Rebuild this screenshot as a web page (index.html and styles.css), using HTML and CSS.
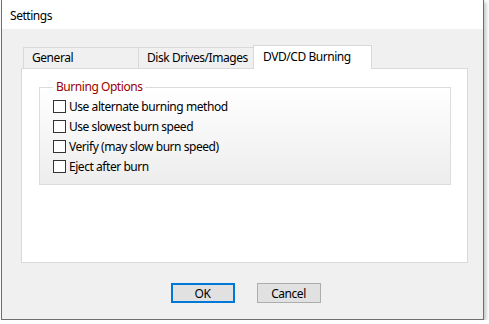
FILE: index.html
```html
<!DOCTYPE html>
<html lang="en">

<head>
    <meta charset="UTF-8" />
    <title>Settings</title>
    <link rel="stylesheet" href="styles.css">
</head>

<body>
    <div class="window">
        <div class="titlebar">Settings</div>

        <div class="content">
            <div class="tabs">
                <div class="tab">General</div>
                <div class="tab">Disk Drives/Images</div>
                <div class="tab active">DVD/CD Burning</div>
            </div>

            <div class="panel">
                <fieldset class="group">
                    <legend>Burning Options</legend>
                    <label class="check"><input type="checkbox"> Use alternate burning method</label>
                    <label class="check"><input type="checkbox"> Use slowest burn speed</label>
                    <label class="check"><input type="checkbox"> Verify (may slow burn speed)</label>
                    <label class="check"><input type="checkbox"> Eject after burn</label>
                </fieldset>
            </div>

            <div class="buttons">
                <button class="btn default">OK</button>
                <button class="btn">Cancel</button>
            </div>
        </div>
    </div>
</body>

</html>
```

FILE: styles.css
```css
body {
    margin: 0;
    padding: 0;
    background-color: #ffffff;
    font-family: 'Noto Sans', 'Open Sans', sans-serif;
    font-size: 12px;
    letter-spacing: -0.45px;
    color: #000;
}

.window {
    width: 483px;
    height: 320px;
    margin-left: 1px;
    box-sizing: border-box;
    background-color: #f0f0f0;
    border: 1px solid #6e6e6e;
    border-top: none;
    box-shadow: 2px 2px 4px rgba(0, 0, 0, 0.25);
}

.titlebar {
    height: 29px;
    line-height: 31px;
    padding-left: 8px;
    background-color: #ffffff;
}

.content {
    padding: 16px 15px 0 19px;
}

.tabs {
    display: flex;
    align-items: flex-end;
    height: 23px;
    padding-left: 2px;
    white-space: nowrap;
}

.tab {
    width: 115px;
    height: 21px;
    box-sizing: border-box;
    padding-left: 8px;
    line-height: 20px;
    border: 1px solid #d9d9d9;
    border-bottom: none;
    border-right: none;
    background-color: #f0f0f0;
}

.tab.active {
    width: 119px;
    height: 24px;
    margin-bottom: -1px;
    padding-left: 9px;
    line-height: 22px;
    border-right: 1px solid #d9d9d9;
    background-color: #ffffff;
    position: relative;
    z-index: 1;
}

.panel {
    height: 195px;
    box-sizing: border-box;
    background-color: #ffffff;
    border: 1px solid #d9d9d9;
    padding: 11px 16px 0 17px;
}

.group {
    margin: 0;
    padding: 2px 0 8px 13px;
    border: 1px solid #dcdcdc;
    background: linear-gradient(#ffffff, #ededed);
}

.group legend {
    padding: 0 3px;
    line-height: 14px;
    color: #9c0000;
}

.check {
    display: flex;
    align-items: center;
    height: 20px;
}

.check input {
    appearance: none;
    width: 13px;
    height: 13px;
    margin: 0 3px 0 0;
    border: 1px solid #333333;
    background-color: #ffffff;
    border-radius: 0;
}

.buttons {
    display: flex;
    justify-content: center;
    gap: 22px;
    margin-top: 20px;
    padding-left: 2px;
}

.btn {
    width: 64px;
    height: 20px;
    box-sizing: border-box;
    padding: 0;
    font-family: inherit;
    font-size: 12px;
    letter-spacing: inherit;
    color: #000;
    background-color: #e1e1e1;
    border: 1px solid #adadad;
    border-radius: 0;
}

.btn.default {
    border: 2px solid #0078d7;
}
```
